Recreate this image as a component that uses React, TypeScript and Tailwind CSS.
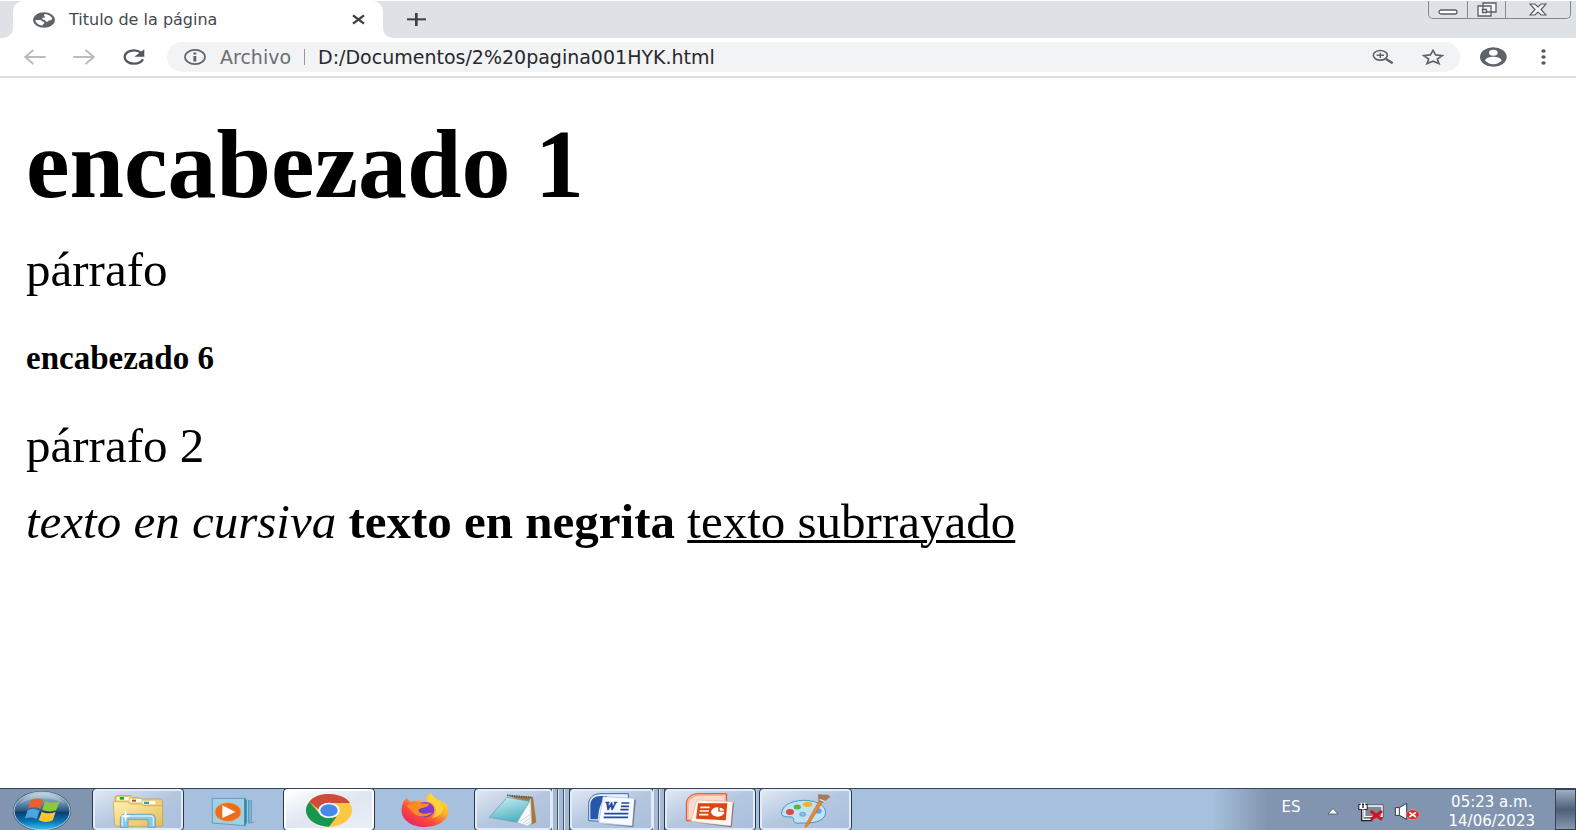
import { useState, type ReactNode } from "react";

const uiFont = "font-['DejaVu_Sans',sans-serif]";

function Globe() {
  return (
    <svg width="22" height="16" viewBox="98 35 66 46" preserveAspectRatio="none" aria-hidden="true">
      <ellipse cx="131" cy="58" rx="33" ry="22.5" fill="#5f6368" />
      <path d="M134 41c10 1 18 6 22 13-2 4-5 6-10 5-2 4-5 5-9 3-2-4-5-5-9-5-3-2-3-5 1-6h5c1-3-2-4-3-6 0-2 1-3 3-4z" fill="#fff" />
      <path d="M105 58h14c5 1 6 4 9 5 3 0 5 2 4 4-3 2-5 3-5 7-12-1-21-7-22-16z" fill="#fff" />
    </svg>
  );
}

function Arrow({ flip = false }: { flip?: boolean }) {
  return (
    <svg width="22" height="16" viewBox="0 0 66 48" aria-hidden="true" fill="none" stroke="#babcbe" strokeWidth="6">
      {flip ? <path d="M1 24h60M38 3l24 21-24 21" /> : <path d="M65 24H5M28 3L4 24l24 21" />}
    </svg>
  );
}

function Reload() {
  return (
    <svg width="22" height="16" viewBox="368 148 66 48" aria-hidden="true">
      <path d="M422 159c-6-5-13-7-21-7-16 0-28 9-28 20s12 20 28 20c12 0 23-5 27-13" fill="none" stroke="#55585c" strokeWidth="7" />
      <path d="M432 149v22h-30z" fill="#55585c" />
    </svg>
  );
}

function Info() {
  return (
    <svg width="22" height="16" viewBox="551 149 68 46" preserveAspectRatio="none" aria-hidden="true">
      <ellipse cx="585" cy="172" rx="31" ry="20.5" fill="none" stroke="#5f6368" strokeWidth="5" />
      <path d="M580 169h9v16h-9zM580 159h9v6h-9z" fill="#5f6368" />
    </svg>
  );
}

function ZoomIcon() {
  return (
    <svg width="22" height="16" viewBox="95 148 66 48" aria-hidden="true" fill="none" stroke="#5f6368">
      <ellipse cx="120" cy="167" rx="21" ry="14.5" strokeWidth="5" />
      <path d="M109 167h22M120 159v16" strokeWidth="4.5" />
      <path d="M136 177l21 14" strokeWidth="7" />
    </svg>
  );
}

function Star() {
  return (
    <svg width="22" height="16" viewBox="244 149 66 46" preserveAspectRatio="none" aria-hidden="true">
      <path d="M277 153l8 13 20 2-15 10 5 13-18-7-18 7 5-13-15-10 20-2z" fill="none" stroke="#5f6368" strokeWidth="5" />
    </svg>
  );
}

function Avatar() {
  return (
    <svg width="27" height="20" viewBox="422 142 81 59" preserveAspectRatio="none" aria-hidden="true">
      <ellipse cx="462" cy="171.5" rx="40" ry="29" fill="#5f6368" />
      <ellipse cx="462" cy="159" rx="13" ry="9" fill="#fff" />
      <path d="M437 182c3-8 16-11 25-11s22 3 25 11c-6 7-15 11-25 11s-19-4-25-11z" fill="#fff" />
    </svg>
  );
}

function StartOrb() {
  return (
    <svg width="60" height="42" viewBox="37 24 180 126" aria-hidden="true">
      <defs>
        <linearGradient id="orb" x1="0" y1="0" x2="0" y2="1">
          <stop offset="0" stopColor="#b9cddd" />
          <stop offset=".32" stopColor="#5f86a6" />
          <stop offset=".5" stopColor="#26557f" />
          <stop offset=".53" stopColor="#073e70" />
          <stop offset=".78" stopColor="#0a77b3" />
          <stop offset="1" stopColor="#35c7f4" />
        </linearGradient>
      </defs>
      <ellipse cx="127" cy="90" rx="87" ry="60" fill="#33506e" />
      <ellipse cx="127" cy="90" rx="84" ry="57" fill="url(#orb)" stroke="#b9d0e0" strokeWidth="3" />
      <path d="M94 56c12-6 24-4 36 0l-8 27c-12-5-25-6-37 0z" fill="#e8602c" />
      <path d="M136 60c14 6 28 6 45 1l-12 27c-14 5-27 4-41-2z" fill="#8fc63d" />
      <path d="M84 88c12-6 24-4 36 1l-9 25c-11-6-24-6-36-1z" fill="#4fa3e0" />
      <path d="M126 92c14 6 27 6 42 1l-9 25c-15 7-29 6-42-1z" fill="#fdc42b" />
      <path d="M58 72c12-22 40-36 70-36s56 12 68 34c-20-14-44-18-70-18s-50 6-68 20z" fill="#fff" opacity=".22" />
    </svg>
  );
}

function FolderIcon() {
  return (
    <svg width="54" height="42" viewBox="333 24 162 126" aria-hidden="true">
      <defs>
        <linearGradient id="folder" x1="0" y1="0" x2="1" y2="1">
          <stop offset="0" stopColor="#fff1b3" />
          <stop offset="1" stopColor="#e2bd57" />
        </linearGradient>
      </defs>
      <path d="M345 62V48l6-4h42l6 6h18l5 4h60l5 6v72h-20z" fill="#ecd27d" stroke="#b8963c" strokeWidth="2" />
      <path d="M352 48h34v10h-34zM390 54h34v10h-34zM428 60h38v10h-38z" fill="#fff" />
      <path d="M359 48h13v8h-13z" fill="#13b313" />
      <path d="M396 56h12v6h-12z" fill="#bf4c1c" />
      <path d="M432 62h15v7h-15z" fill="#3a9cb0" />
      <path d="M340 62l44 1 6 6h34l8 5h56v58q0 4-6 4H350q-6 0-6-6z" fill="url(#folder)" stroke="#c5a245" strokeWidth="2" />
      <path d="M361 139v-27q0-12 12-12h81q12 0 12 12v27h-22v-23h-60v23z" fill="#8cc8e6" stroke="#4f97bd" strokeWidth="2" />
      <path d="M367 135v-23q0-7 8-7h78q7 0 7 7v23" fill="none" stroke="#d2effb" strokeWidth="4" />
      <path d="M377 84l3 18 14 3-14 4-3 16-4-16-13-4 13-3z" fill="#fff" />
    </svg>
  );
}

function MediaIcon() {
  return (
    <svg width="46" height="42" viewBox="634 24 138 126" aria-hidden="true">
      <path d="M700 52l56 6v66l14-3-16 6-50 3z" fill="#4a91b8" />
      <path d="M744 56v72M751 58v67" stroke="#bfe2f1" strokeWidth="2.5" />
      <path d="M638 52h98v82l-98-8z" fill="#9fd0e6" stroke="#5196bb" strokeWidth="2.5" />
      <path d="M736 52v82" stroke="#327da5" strokeWidth="4" />
      <ellipse cx="685" cy="93" rx="39" ry="28" fill="#ee6d18" stroke="#f7a15f" strokeWidth="2" />
      <path d="M668 73l39 20-39 18z" fill="#fff" />
    </svg>
  );
}

function ChromeIcon() {
  return (
    <svg width="48" height="42" viewBox="75 24 144 126" aria-hidden="true">
      <ellipse cx="147" cy="88" rx="69" ry="49" fill="#fbc843" />
      <path d="M88 62C100 46 122 39 147 39c29 0 53 11 63 27h-63c-15 0-29 9-30 20z" fill="#d04a3c" />
      <path d="M88 62l29 34c6 10 18 15 31 15l22-4-23 30c-38 0-69-22-69-49 0-10 4-18 10-26z" fill="#189650" />
      <ellipse cx="147" cy="88" rx="33" ry="23" fill="#f4f6fa" />
      <ellipse cx="147" cy="88" rx="26" ry="18.5" fill="#4687ea" />
    </svg>
  );
}

function FirefoxIcon() {
  return (
    <svg width="48" height="42" viewBox="360 24 144 126" aria-hidden="true">
      <defs>
        <linearGradient id="fire" x1="1" y1="0" x2=".2" y2="1">
          <stop offset="0" stopColor="#fff04a" />
          <stop offset=".4" stopColor="#ffb02d" />
          <stop offset=".7" stopColor="#fb4a38" />
          <stop offset="1" stopColor="#e71f6c" />
        </linearGradient>
        <linearGradient id="core" x1="0" y1="1" x2="1" y2="0">
          <stop offset="0" stopColor="#5843c8" />
          <stop offset="1" stopColor="#9a35d8" />
        </linearGradient>
      </defs>
      <path d="M378 50c2 8 6 10 12 12 5-2 12-3 19-2 4-3 12-6 18-6-5 3-8 6-8 9l20-1c-10-11-1-22 13-26 0 9 10 14 22 21 6 3 9 6 12 10v-6c11 8 16 20 16 30 0 27-31 47-70 47s-70-21-70-49c0-16 4-30 16-39z" fill="url(#fire)" />
      <ellipse cx="432" cy="86" rx="28" ry="23" fill="url(#core)" />
      <path d="M377 74c14-7 31-7 42-7l25 1c2 9-17 11-24 14-7 4-10 5-6 10 7 8 24 8 39 2-6 13-35 17-51 6-10-7-15-17-25-26z" fill="#ff8a24" />
      <path d="M439 62c17 2 29 14 25 31-3 11-9 15-13 18 22-2 38-15 35-32-2-9-9-15-18-21-7-5-12-9-15-18-11 5-17 12-14 22z" fill="#ffd83a" opacity=".8" />
    </svg>
  );
}

function NotepadIcon() {
  return (
    <svg width="50" height="42" viewBox="626 24 150 126" aria-hidden="true">
      <defs>
        <linearGradient id="pad" x1="0" y1="0" x2=".4" y2="1">
          <stop offset="0" stopColor="#d4f1f4" />
          <stop offset="1" stopColor="#52b4c4" />
        </linearGradient>
      </defs>
      <path d="M682 43l76 5 10 76-14 7-16-66z" fill="#a7783c" />
      <path d="M751 50l3 76-12 9-20-14z" fill="#edf1f1" stroke="#9eb0b4" />
      <path d="M627 109l53-60 68 12-37 63z" fill="url(#pad)" stroke="#579eac" strokeWidth="2" />
      <path d="M711 124l37-62 4 62-11 11z" fill="#f7fafa" stroke="#9cb9bf" />
      <path d="M680 43l75 7" stroke="#505f62" strokeWidth="6" strokeDasharray="4 3" />
      <path d="M719 121l30-20M728 126l22-15M736 130l15-9" stroke="#adc0c4" strokeWidth="2" />
    </svg>
  );
}

function WordIcon() {
  return (
    <svg width="50" height="42" viewBox="76 24 150 126" aria-hidden="true">
      <path d="M81 119V70c0-20 14-32 37-32h82v64l-82 19z" fill="#e8effa" stroke="#4168b0" strokeWidth="3" />
      <path d="M86 115V72c0-17 12-27 32-27h20c-22 16-27 40-29 70z" fill="#2857ab" />
      <path d="M124 47l95 5-7 83-101-10z" fill="#f8fbff" stroke="#a7bcdd" strokeWidth="2" />
      <text x="129" y="88" fontFamily="Liberation Serif, serif" fontSize="38" fontStyle="italic" fontWeight="700" fill="#24489c" stroke="#24489c" strokeWidth="2">W</text>
      <path d="M179 66h24M178 76h24M176 86h25M128 98h72M126 109h73" stroke="#24489c" strokeWidth="5" />
      <path d="M218 54l5 4-8 81-103-11 100 7z" fill="#73849c" />
    </svg>
  );
}

function PowerPointIcon() {
  return (
    <svg width="50" height="42" viewBox="376 24 150 126" aria-hidden="true">
      <path d="M380 119V70c0-20 14-32 37-32h84v64l-84 19z" fill="#f5b39e" stroke="#d4532b" strokeWidth="3" />
      <path d="M387 115V74c0-19 14-29 34-29h73v14h-73c-15 20-19 34-22 56z" fill="#fde1d7" opacity=".85" />
      <path d="M411 57l109 5-5 74-121-15z" fill="#fff4ef" stroke="#e4b4a2" strokeWidth="2" />
      <path d="M415 67h88l-5 51-89-5z" fill="#dc4611" />
      <path d="M422 79h28M420 90h28M418 101h28" stroke="#fff4ea" strokeWidth="5" />
      <ellipse cx="474" cy="93" rx="20" ry="14" fill="#fff" />
      <path d="M476 92V78h22v14z" fill="#dc4611" />
      <path d="M480 89V80c8 0 13 4 13 9z" fill="#fff" />
      <path d="M520 64l3 3-7 72-116-15 113 11z" fill="#7e7b83" />
    </svg>
  );
}

function PaintIcon() {
  return (
    <svg width="52" height="42" viewBox="660 24 156 126" aria-hidden="true">
      <path d="M665 101c-2-25 25-42 65-43 36-1 67 15 67 36 0 22-28 33-61 32-15-1-22 3-30-1-9-4-1-13-9-16-9-4-21 3-32-8z" fill="#bfe3f5" stroke="#4a97bd" strokeWidth="3" />
      <ellipse cx="728" cy="100" rx="9" ry="6" fill="#8fbbdc" stroke="#4a97bd" strokeWidth="2" />
      <ellipse cx="690" cy="93" rx="12" ry="9" fill="#d94b48" />
      <ellipse cx="712" cy="78" rx="11" ry="7.5" fill="#5cb542" />
      <ellipse cx="743" cy="70" rx="14" ry="8" fill="#f3b229" />
      <ellipse cx="775" cy="90" rx="10" ry="8" fill="#6d9eda" />
      <path d="M788 62l-10-4-43 76 2 6 9-9z" fill="#e98a30" stroke="#b7601a" strokeWidth="1.5" />
      <path d="M774 40c9-2 15 2 21 1 9-1 14 3 17 8-8 1-10 7-15 10-4 5-9 7-17 5-7-5-5-16-6-24z" fill="#a27c5c" />
      <path d="M779 55l16 7" stroke="#dfd9d3" strokeWidth="4" />
    </svg>
  );
}

function NetworkIcon() {
  return (
    <svg width="26" height="20" viewBox="66 38 78 60" aria-hidden="true">
      <path d="M84 47h57v38H84z" fill="#7d8795" stroke="#20252d" strokeWidth="2" />
      <path d="M86 50h52v32H86z" fill="none" stroke="#fff" strokeWidth="4" />
      <path d="M67 44h28v18H67z" fill="#20252d" />
      <path d="M70 47h22v12H70z" fill="#fff" />
      <path d="M76 40v12M86 40v12" stroke="#fff" strokeWidth="4" />
      <path d="M79 46h4v10h-4z" fill="#20252d" />
      <path d="M79 60v32h30" fill="none" stroke="#20252d" strokeWidth="8" />
      <path d="M81 60v30h28" fill="none" stroke="#fff" strokeWidth="4" />
      <path d="M104 65l34 26M138 65l-34 26" stroke="#cf1420" strokeWidth="9" />
    </svg>
  );
}

function VolumeIcon() {
  return (
    <svg width="26" height="20" viewBox="174 38 78 60" aria-hidden="true">
      <path d="M178 55h12l22-13v48l-22-12h-12z" fill="#fff" stroke="#303947" strokeWidth="3" />
      <path d="M190 56v22" stroke="#303947" strokeWidth="3" />
      <ellipse cx="230" cy="76" rx="20" ry="15" fill="#d22f2c" stroke="#f0a09b" strokeWidth="2" />
      <path d="M220 69l20 14M240 69l-20 14" stroke="#fff" strokeWidth="5" />
    </svg>
  );
}

function TaskButton({ label, children, look = "w-[91px]", stacked = 0 }: { label: string; children: ReactNode; look?: string; stacked?: number }) {
  return (
    <div className="flex h-full">
      <button type="button" aria-label={label} className={`flex items-center justify-center ${look}`}>
        {children}
      </button>
      {Array.from({ length: stacked }, (_, i) => (
        <span key={i} className="h-full w-[6px] border-r border-l border-r-[#40536c] border-l-[#e2ebf5] bg-[#a3b9d4]" />
      ))}
    </div>
  );
}

const framed = "rounded-[3px] border-2 border-[#e3ebf5] bg-linear-to-br from-[#dfe7f3] via-[#b5c7e0] to-[#aabfdd] outline outline-[#27384f]";

export default function App() {
  const [url, setUrl] = useState("D:/Documentos/2%20pagina001HYK.html");
  return (
    <div className="flex min-h-screen flex-col bg-white text-black">
      <header className={uiFont}>
        <div className="flex h-[38px] items-stretch border-t border-white bg-[#dee1e6]">
          <div className="w-[13px] bg-white">
            <div className="h-full rounded-br-[10px] bg-[#dee1e6]" />
          </div>
          <div className="flex w-[370px] items-center rounded-t-[10px] bg-white pr-[18px] pl-5 text-[16px] text-[#45494d]">
            <Globe />
            <span className="ml-[14px] flex-1 whitespace-nowrap">Titulo de la página</span>
            <button type="button" aria-label="Cerrar pestaña">
              <svg width="13" height="11" viewBox="0 0 39 33" aria-hidden="true">
                <path d="M3 4l33 25M36 4L3 29" stroke="#3c4043" strokeWidth="7" />
              </svg>
            </button>
          </div>
          <div className="flex bg-white">
            <div className="flex rounded-bl-[10px] bg-[#dee1e6]">
              <button type="button" aria-label="Nueva pestaña" className="ml-6 flex items-center">
                <svg width="19" height="13" viewBox="0 0 57 39" aria-hidden="true">
                  <path d="M0 19h57" stroke="#3c4043" strokeWidth="6" />
                  <path d="M28 0v39" stroke="#3c4043" strokeWidth="8" />
                </svg>
              </button>
            </div>
          </div>
          <div className="mr-[5px] ml-auto flex h-[18px] divide-x divide-[#85898f] rounded-b-[5px] border border-t-0 border-[#85898f]">
            <button type="button" aria-label="Minimizar" className="flex w-[39px] items-end justify-center pb-[3px]">
              <svg width="20" height="6" viewBox="0 0 20 6" aria-hidden="true">
                <rect x="1" y="1" width="18" height="4" rx="2" fill="#fff" stroke="#595d66" strokeWidth="1.3" />
              </svg>
            </button>
            <button type="button" aria-label="Restaurar" className="flex w-[38px] items-center justify-center">
              <svg width="20" height="15" viewBox="0 0 20 15" aria-hidden="true" fill="#f5f6f7" stroke="#595d66" strokeWidth="1.3">
                <path d="M6 1h13v9H6zM1 4h13v10H1z" />
                <path d="M5.500 7.500h4v3h-4z" />
              </svg>
            </button>
            <button type="button" aria-label="Cerrar" className="flex w-[64px] items-center justify-center">
              <svg width="18" height="13" viewBox="0 0 18 13" aria-hidden="true">
                <path d="M1 1h5l3 3 3-3h5l-5 5.500 5 5.500h-5L9 9l-3 3H1l5-5.500z" fill="#f5f6f7" stroke="#595d66" strokeWidth="1.2" />
              </svg>
            </button>
          </div>
        </div>
        <div className="flex h-10 items-center border-b-2 border-[#dcdddf] pr-[30px] pl-6">
          <button type="button" aria-label="Atrás"><Arrow /></button>
          <button type="button" aria-label="Adelante" className="ml-[27px]"><Arrow flip /></button>
          <button type="button" aria-label="Recargar" className="ml-7"><Reload /></button>
          <div className="ml-[22px] flex h-[30px] flex-1 items-center rounded-full bg-[#f1f3f4] pr-4 pl-[17px] text-[19px]">
            <Info />
            <label htmlFor="address" className="ml-[14px] text-[#6b6f73]">Archivo</label>
            <span className="mx-[13px] h-4 w-px bg-[#96999c]" />
            <input
              id="address"
              value={url}
              onChange={(e) => setUrl(e.target.value)}
              spellCheck={false}
              className="min-w-0 flex-1 bg-transparent text-[#27292c] outline-none"
            />
            <button type="button" aria-label="Zoom"><ZoomIcon /></button>
            <button type="button" aria-label="Añadir a marcadores" className="ml-7"><Star /></button>
          </div>
          <button type="button" aria-label="Perfil" className="ml-5"><Avatar /></button>
          <button type="button" aria-label="Menú" className="ml-[34px]">
            <svg width="5" height="16" viewBox="0 0 5 16" aria-hidden="true" fill="#55585c">
              <ellipse cx="2.500" cy="2" rx="2.200" ry="1.700" />
              <ellipse cx="2.500" cy="8" rx="2.200" ry="1.700" />
              <ellipse cx="2.500" cy="14" rx="2.200" ry="1.700" />
            </svg>
          </button>
        </div>
      </header>

      <main className="flex-1 px-[26px] pt-11 font-['Liberation_Serif',serif] text-[49px] leading-14">
        <h1 className="text-[98px] leading-[84px] font-bold">encabezado 1</h1>
        <p className="mt-9">párrafo</p>
        <h6 className="mt-8 text-[33px] leading-14 font-bold">encabezado 6</h6>
        <p className="mt-8">párrafo 2</p>
        <p className="mt-5">
          <i>texto en cursiva</i> <b>texto en negrita</b> <u className="decoration-[3px]">texto subrrayado</u>
        </p>
      </main>

      <footer className={`flex h-[42px] overflow-hidden border-t border-[#34455d] bg-[#a7c0dd] ${uiFont}`}>
        <button type="button" aria-label="Inicio" className="flex w-[92px] items-center justify-center bg-[#8195b0] pr-2"><StartOrb /></button>
        <nav aria-label="Aplicaciones" className="flex pl-px">
          <TaskButton label="Explorador" look={`w-[90px] ${framed}`}><FolderIcon /></TaskButton>
          <TaskButton label="Reproductor multimedia" look="w-[101px]"><MediaIcon /></TaskButton>
          <TaskButton label="Chrome" look="w-[90px] rounded-[3px] border-2 border-white bg-linear-to-br from-white via-[#dfe6f0] to-[#eaf0f8] outline outline-[#27384f]"><ChromeIcon /></TaskButton>
          <TaskButton label="Firefox" look="w-[101px]"><FirefoxIcon /></TaskButton>
          <TaskButton label="Bloc de notas" look={`w-[77px] ${framed}`} stacked={3}><NotepadIcon /></TaskButton>
          <TaskButton label="Word" look={`w-[83px] ${framed}`} stacked={2}><WordIcon /></TaskButton>
          <TaskButton label="PowerPoint" look={`w-[90px] ${framed}`}><PowerPointIcon /></TaskButton>
          <TaskButton label="Paint" look={`ml-[5px] w-[91px] ${framed}`}><PaintIcon /></TaskButton>
        </nav>
        <div className="ml-auto flex items-center bg-linear-to-r from-[#a7c0dd] to-[#8195b0] to-[56px] pl-[70px] text-[15px] leading-[19px] text-white">
          <span className="pb-1">ES</span>
          <button type="button" aria-label="Mostrar iconos ocultos" className="ml-[26px] pt-1">
            <svg width="12" height="7" viewBox="0 0 12 7" aria-hidden="true">
              <path d="M6 .5L11 6H1z" fill="#fff" stroke="#47566b" strokeWidth=".8" />
            </svg>
          </button>
          <button type="button" aria-label="Red" className="ml-[19px] pt-1"><NetworkIcon /></button>
          <button type="button" aria-label="Volumen" className="ml-[10px] pt-1"><VolumeIcon /></button>
          <time dateTime="2023-06-14T05:23" className="ml-[29px] pt-1 text-center">
            05:23 a.m.
            <br />
            14/06/2023
          </time>
          <button type="button" aria-label="Mostrar escritorio" className="ml-5 h-full w-[21px] border border-[#31445b] bg-linear-to-b from-[#a0afc0] via-[#4c6078] to-[#8698ac]" />
        </div>
      </footer>
    </div>
  );
}
